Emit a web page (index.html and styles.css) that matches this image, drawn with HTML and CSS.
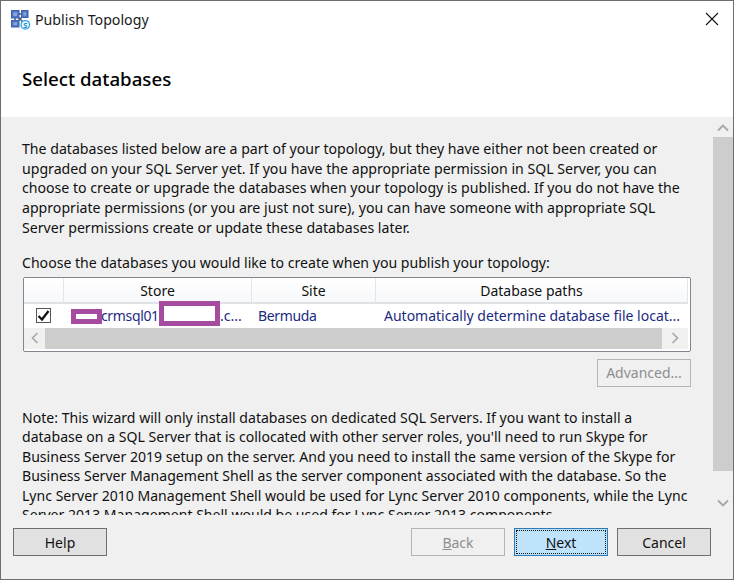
FILE: index.html
```html
<!DOCTYPE html>
<html lang="en">
<head>
<meta charset="utf-8">
<title>Publish Topology</title>
<link rel="stylesheet" href="styles.css">
</head>
<body>
<div class="window">
  <div class="titlebar">
    <svg class="app-icon" width="20" height="20" viewBox="0 0 20 20">
      <path d="M4 4L14 4M4 4L4 14M4 14L14 4M4 4L14 14" stroke="#47557a" stroke-width="1.5" fill="none"/>
      <rect x="0.5" y="0.5" width="7.5" height="7.5" fill="#4f78c8" stroke="#3c5fa8" stroke-width="1"/>
      <rect x="2.5" y="2.5" width="3.5" height="3.5" fill="#8fa8dc"/>
      <rect x="10.5" y="0.5" width="6.5" height="7" fill="#4f78c8" stroke="#3c5fa8" stroke-width="1"/>
      <rect x="12.5" y="2.5" width="2.5" height="3" fill="#8fa8dc"/>
      <rect x="0.5" y="10.5" width="7.5" height="6.5" fill="#4f78c8" stroke="#3c5fa8" stroke-width="1"/>
      <rect x="2.5" y="12.5" width="3.5" height="2.5" fill="#8fa8dc"/>
      <circle cx="14.3" cy="14.8" r="4.9" fill="#2fa8e4"/>
      <circle cx="14.3" cy="14.8" r="3.6" fill="#eaf6fd"/>
      <text x="14.3" y="17.6" class="icon-s">S</text>
    </svg>
    <span class="title">Publish Topology</span>
    <svg class="close" width="14" height="14" viewBox="0 0 14 14"><path d="M1 1L13 13M13 1L1 13" stroke="#111" stroke-width="1.1" fill="none"/></svg>
  </div>
  <div class="header"><h1>Select databases</h1></div>
  <div class="content">
    <div class="scroll-area">
      <p class="intro">The databases listed below are a part of your topology, but they have either not been created or<br>upgraded on your SQL Server yet. If you have the appropriate permission in SQL Server, you can<br>choose to create or upgrade the databases when your topology is published. If you do not have the<br>appropriate permissions (or you are just not sure), you can have someone with appropriate SQL<br>Server permissions create or update these databases later.</p>
      <p class="choose">Choose the databases you would like to create when you publish your topology:</p>
      <div class="table">
        <div class="thead">
          <div class="th th-check"></div>
          <div class="th th-store">Store</div>
          <div class="th th-site">Site</div>
          <div class="th th-path">Database paths</div>
        </div>
        <div class="row">
          <div class="td td-check">
            <span class="checkbox"><svg width="13" height="13" viewBox="0 0 13 13"><path d="M1.5 7L5 10.5L11.5 2" stroke="#111" stroke-width="2.2" fill="none"/></svg></span>
          </div>
          <div class="td td-store"><span class="mask mask-a"></span>crmsql01<span class="mask mask-b"></span><span class="store-end">.c...</span></div>
          <div class="td td-site">Bermuda</div>
          <div class="td td-path">Automatically determine database file locat...</div>
        </div>
        <div class="hscroll">
          <span class="hbtn"><svg width="8" height="12" viewBox="0 0 8 12"><path d="M6.5 1L1.5 6L6.5 11" stroke="#a6a6a6" stroke-width="1.6" fill="none"/></svg></span>
          <span class="hthumb"></span>
          <span class="hbtn"><svg width="8" height="12" viewBox="0 0 8 12"><path d="M1.5 1L6.5 6L1.5 11" stroke="#a6a6a6" stroke-width="1.6" fill="none"/></svg></span>
        </div>
      </div>
      <div class="advanced-row"><button class="btn disabled">Advanced...</button></div>
      <p class="note">Note: This wizard will only install databases on dedicated SQL Servers. If you want to install a<br>database on a SQL Server that is collocated with other server roles, you'll need to run Skype for<br>Business Server 2019 setup on the server. And you need to install the same version of the Skype for<br>Business Server Management Shell as the server component associated with the database. So the<br>Lync Server 2010 Management Shell would be used for Lync Server 2010 components, while the Lync<br>Server 2013 Management Shell would be used for Lync Server 2013 components.</p>
    </div>
    <div class="vscroll">
      <span class="vbtn vbtn-up"><svg width="12" height="8" viewBox="0 0 12 8"><path d="M1 6.5L6 1.5L11 6.5" stroke="#a6a6a6" stroke-width="1.8" fill="none"/></svg></span>
      <span class="vthumb"></span>
      <span class="vrest"></span>
      <span class="vbtn"><svg width="12" height="8" viewBox="0 0 12 8"><path d="M1 1.5L6 6.5L11 1.5" stroke="#a6a6a6" stroke-width="1.8" fill="none"/></svg></span>
    </div>
  </div>
  <div class="footer">
    <button class="btn">Help</button>
    <span class="spacer"></span>
    <button class="btn disabled"><u>B</u>ack</button>
    <button class="btn primary"><u>N</u>ext</button>
    <button class="btn">Cancel</button>
  </div>
</div>
</body>
</html>
```
FILE: styles.css
```css
* { box-sizing: border-box; }
html, body { margin: 0; padding: 0; }
body {
  width: 734px;
  height: 580px;
  overflow: hidden;
  font-family: "Noto Sans", "Open Sans", sans-serif;
  font-size: 14px;
  color: #111;
}
.window {
  width: 734px;
  height: 580px;
  display: flex;
  flex-direction: column;
  border: 1px solid #6e6e6e;
  background: #f0f0f0;
}
.titlebar {
  height: 37px;
  flex: none;
  display: flex;
  align-items: center;
  padding: 0 14px 0 10px;
  gap: 4px;
  background: #fff;
}
.app-icon { flex: none; }
.icon-s { font-size: 7.5px; font-weight: 700; fill: #1b86c8; text-anchor: middle; }
.title { flex: 1; color: #1a1a1a; font-size: 14.2px; }
.close { position: relative; top: -1px; }
.header {
  height: 79px;
  flex: none;
  background: #fff;
  padding: 29px 0 0 21px;
}
h1 {
  margin: 0;
  font-size: 18.7px;
  line-height: 24px;
  font-weight: 500;
  color: #000;
}
.content {
  height: 398px;
  flex: none;
  display: flex;
}
.scroll-area {
  flex: 1;
  min-width: 0;
  overflow: hidden;
  padding: 22px 22px 0 21px;
}
p { margin: 0; white-space: nowrap; }
.intro { line-height: 19.7px; font-size: 14.13px; }
.note { line-height: 19.6px; font-size: 14.07px; margin-top: 21px; }
.choose { margin-top: 15px; line-height: 20px; font-size: 14.1px; }
.table {
  margin: 4px 0 0 1px;
  width: 668px;
  height: 75px;
  border: 1px solid #82878f;
  border-radius: 2px;
  background: #fff;
  padding: 0 2px 0 0;
}
.thead {
  display: flex;
  height: 26px;
  border-bottom: 2px solid #dfe3e8;
  background: linear-gradient(#fff, #f7f8fa);
}
.th {
  text-align: center;
  line-height: 26px;
  border-right: 1px solid #e2e5ea;
}
.th-check, .td-check { width: 40px; flex: none; }
.th-store, .td-store { width: 188px; flex: none; }
.th-site, .td-site { width: 124px; flex: none; }
.th-path, .td-path { width: 312px; flex: none; }
.row {
  position: relative;
  display: flex;
  height: 24px;
  line-height: 24px;
  color: #1a2a80;
  white-space: nowrap;
}
.td-check { display: flex; align-items: center; padding-left: 12px; }
.checkbox {
  width: 15px;
  height: 15px;
  border: 1px solid #555;
  background: #fff;
  display: flex;
  align-items: center;
  justify-content: center;
}
.td-store { position: relative; padding-left: 37px; letter-spacing: -0.35px; }
.td-site { padding-left: 6px; letter-spacing: -0.35px; }
.td-path { padding-left: 8px; }
.mask { position: absolute; border: 5px solid #a54ba0; background: #fff; }
.mask-a { left: 7px; top: 5px; width: 31px; height: 15px; }
.mask-b { left: 95px; top: -3px; width: 61px; height: 25px; }
.store-end { position: absolute; left: 156px; letter-spacing: 0; }
.hscroll {
  display: flex;
  height: 21px;
}
.hbtn {
  width: 21px;
  flex: none;
  background: #f0f0f0;
  display: flex;
  align-items: center;
  justify-content: center;
}
.hbtn:last-child { width: 26px; }
.hthumb { flex: 1; background: #cdcdcd; }
.advanced-row {
  display: flex;
  justify-content: flex-end;
  margin-top: 7px;
}
.btn {
  width: 94px;
  height: 28px;
  padding: 0;
  font: inherit;
  color: #111;
  background: #e1e1e1;
  border: 1px solid #6f6f6f;
  flex: none;
}
.btn.disabled {
  background: #f0f0f0;
  border-color: #b4b4b4;
  color: #8e8e8e;
}
.btn.primary {
  background: #bfe3fb;
  border-color: #2b7ab5;
  outline: 1px dotted #111;
  outline-offset: -3px;
}
.vscroll {
  width: 20px;
  flex: none;
  display: flex;
  flex-direction: column;
}
.vbtn {
  height: 20px;
  flex: none;
  display: flex;
  align-items: center;
  justify-content: center;
}
.vbtn-up { padding-top: 2px; }
.vthumb { height: 334px; background: #cdcdcd; flex: none; }
.vrest { height: 22px; flex: none; }
.footer {
  flex: 1;
  display: flex;
  align-items: flex-start;
  gap: 9px;
  padding: 13px 22px 0 12px;
}
.spacer { flex: 1; }
```
